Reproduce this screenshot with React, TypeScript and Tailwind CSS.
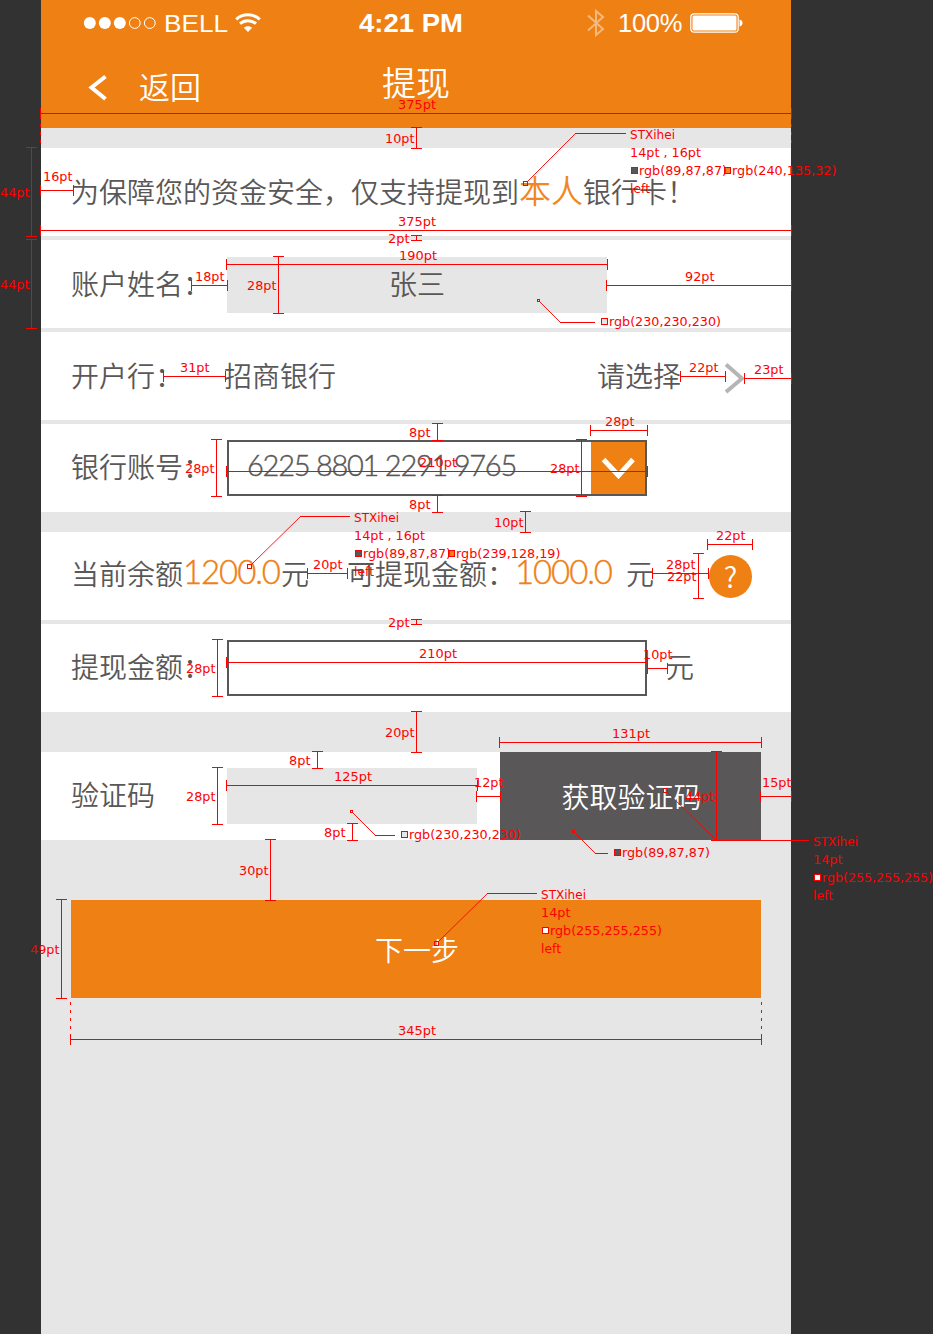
import type { ReactNode } from "react";

const RED = "#ff0000";

type Mark = { text: string; x: number; y: number; w: number };

function Label({ text, x, y, w }: Mark) {
  return (
    <text x={x} y={y} textLength={w} lengthAdjust="spacingAndGlyphs" fill={RED}>
      {text}
    </text>
  );
}

/* [x1, x2, y, label, labelX, labelBaseline, labelWidth] */
const horizontals: [number, number, number, string, number, number, number][] = [
  [40, 791, 113, "375pt", 398, 109, 38],
  [40, 73, 190, "16pt", 43, 181, 29.5],
  [40, 791, 230, "375pt", 398, 226, 38],
  [226, 607, 264, "190pt", 399, 260, 38],
  [191, 227, 285, "18pt", 195, 281, 29.5],
  [606, 791, 285, "92pt", 685, 281, 29.5],
  [163, 225, 376, "31pt", 180, 372, 29.5],
  [680, 725, 376, "22pt", 689, 372, 29.5],
  [744, 791, 378, "23pt", 754, 374, 29.5],
  [590, 647, 430, "28pt", 605, 426, 29.5],
  [226, 647, 471, "210pt", 419, 467, 38],
  [307, 347, 573, "20pt", 313, 569, 29.5],
  [652, 708, 573, "28pt", 666, 569, 29.5],
  [707, 752, 544, "22pt", 716, 540, 29.5],
  [226, 647, 662, "210pt", 419, 658, 38],
  [647, 667, 668, "10pt", 643, 659, 29.5],
  [226, 477, 785, "125pt", 334, 781, 38],
  [476, 500, 796, "12pt", 474, 787, 29.5],
  [499, 761, 742, "131pt", 612, 738, 38],
  [760, 791, 796, "15pt", 762, 787, 29.5],
  [70, 761, 1039, "345pt", 398, 1035, 38],
];

/* [y1, y2, x, label, labelX, labelBaseline, labelWidth] */
const verticals: [number, number, number, string, number, number, number][] = [
  [127, 148, 416, "10pt", 385, 143, 29.5],
  [147, 236, 31, "44pt", 0, 197, 29.5],
  [239, 328, 31, "44pt", 0, 289, 29.5],
  [235, 240, 416, "2pt", 388, 243, 21.5],
  [256, 313, 278, "28pt", 247, 290, 29.5],
  [423, 440, 437, "8pt", 409, 437, 21.5],
  [439, 496, 216, "28pt", 185, 473, 29.5],
  [439, 496, 581, "28pt", 550, 473, 29.5],
  [495, 512, 437, "8pt", 409, 509, 21.5],
  [511, 532, 525, "10pt", 494, 527, 29.5],
  [553, 598, 698, "22pt", 667, 581, 29.5],
  [619, 624, 416, "2pt", 388, 627, 21.5],
  [639, 696, 217, "28pt", 186, 673, 29.5],
  [711, 752, 416, "20pt", 385, 737, 29.5],
  [751, 768, 317, "8pt", 289, 765, 21.5],
  [767, 824, 217, "28pt", 186, 801, 29.5],
  [823, 840, 352, "8pt", 324, 837, 21.5],
  [751, 840, 716, "44pt", 685, 801, 29.5],
  [839, 900, 270, "30pt", 239, 875, 29.5],
  [899, 998, 61, "49pt", 30, 954, 29.5],
];

/* [anchorX, anchorY, anchorSize, elbowX, endX, endY] */
const leaders: number[][] = [
  [525, 183, 4, 575, 626, 133],
  [538, 300, 2, 560, 595, 322],
  [249, 566, 4, 300, 350, 516],
  [351, 811, 2, 375, 395, 835],
  [573, 831, 2, 595, 608, 853],
  [665, 790, 4, 716, 809, 840],
  [436, 943, 4, 487, 537, 893],
];

const swatches: [number, number, string][] = [
  [631, 167, "#595757"],
  [724, 167, "#f08720"],
  [601, 318, "#e6e6e6"],
  [355, 550, "#595757"],
  [448, 550, "#ef8013"],
  [401, 831, "#e6e6e6"],
  [614, 849, "#595757"],
  [814, 874, "#ffffff"],
  [542, 927, "#ffffff"],
];

const notes: Mark[] = [
  { text: "STXihei", x: 630, y: 139, w: 45 },
  { text: "14pt , 16pt", x: 630, y: 157, w: 71 },
  { text: "rgb(89,87,87)", x: 639, y: 175, w: 88 },
  { text: "rgb(240,135,32)", x: 732, y: 175, w: 104.5 },
  { text: "left", x: 630, y: 193, w: 20 },
  { text: "rgb(230,230,230)", x: 609, y: 326, w: 112 },
  { text: "STXihei", x: 354, y: 522, w: 45 },
  { text: "14pt , 16pt", x: 354, y: 540, w: 71 },
  { text: "rgb(89,87,87)", x: 363, y: 558, w: 88 },
  { text: "rgb(239,128,19)", x: 456, y: 558, w: 104.5 },
  { text: "left", x: 354, y: 576, w: 20 },
  { text: "rgb(230,230,230)", x: 409, y: 839, w: 112 },
  { text: "rgb(89,87,87)", x: 622, y: 857, w: 88 },
  { text: "STXihei", x: 813, y: 846, w: 45 },
  { text: "14pt", x: 813, y: 864, w: 29.5 },
  { text: "rgb(255,255,255)", x: 822, y: 882, w: 111 },
  { text: "left", x: 813, y: 900, w: 20 },
  { text: "STXihei", x: 541, y: 899, w: 45 },
  { text: "14pt", x: 541, y: 917, w: 29.5 },
  { text: "rgb(255,255,255)", x: 550, y: 935, w: 112 },
  { text: "left", x: 541, y: 953, w: 20 },
];

/* [x, y1, y2] */
const dashes: number[][] = [
  [40, 124, 144],
  [791, 124, 144],
  [70, 1002, 1030],
  [761, 1002, 1030],
];

function Annotations() {
  return (
    <svg
      className="pointer-events-none absolute left-0 top-0 font-['DejaVu_Sans',sans-serif] text-[13px] font-normal"
      width={933}
      height={1334}
      viewBox="0 0 933 1334"
      fill="none"
    >
      <g stroke={RED} shapeRendering="crispEdges">
        {horizontals.map(([x1, x2, y], i) => (
          <path key={i} d={`M${x1} ${y + 0.5}H${x2}M${x1 + 0.5} ${y - 5}v11M${x2 + 0.5} ${y - 5}v11`} />
        ))}
        {verticals.map(([y1, y2, x], i) => (
          <path key={i} d={`M${x + 0.5} ${y1}V${y2}M${x - 5} ${y1 + 0.5}h11M${x - 5} ${y2 + 0.5}h11`} />
        ))}
        {dashes.map(([x, y1, y2], i) => (
          <path key={i} d={`M${x + 0.5} ${y1}V${y2}`} strokeDasharray="3 5" />
        ))}
        {leaders.map(([ax, ay, s, ex, x2, y2], i) => (
          <g key={i}>
            <path d={`M${ex} ${y2 + 0.5}H${x2}`} />
            <rect x={ax + 0.5 - s / 2} y={ay + 0.5 - s / 2} width={s} height={s} />
          </g>
        ))}
        {swatches.map(([x, y, c], i) => (
          <rect key={i} x={x + 0.5} y={y + 0.5} width={6} height={6} fill={c} />
        ))}
      </g>
      <g stroke={RED} strokeWidth={0.9}>
        {leaders.map(([ax, ay, s, ex, , y2], i) => {
          const down = y2 > ay ? 1 : -1;
          return <path key={i} d={`M${ax + 0.5 + s / 2} ${ay + 0.5 + (down * s) / 2}L${ex + 0.5} ${y2 + 0.5}`} />;
        })}
      </g>
      {horizontals.map(([, , , t, x, y, w], i) => (
        <Label key={i} text={t} x={x} y={y} w={w} />
      ))}
      {verticals.map(([, , , t, x, y, w], i) => (
        <Label key={i} text={t} x={x} y={y} w={w} />
      ))}
      {notes.map((n, i) => (
        <Label key={i} {...n} />
      ))}
    </svg>
  );
}

function StatusBar() {
  return (
    <div className="flex h-[46px] items-center font-['Liberation_Sans',Arial,sans-serif] text-white">
      <svg className="ml-[42px]" width={75} height={14} viewBox="0 0 75 14" fill="#fff">
        <circle cx="6.8" cy="7" r="6" />
        <circle cx="21.8" cy="7" r="6" />
        <circle cx="36.8" cy="7" r="6" />
        <g fill="none" stroke="#fff">
          <circle cx="51.8" cy="7" r="5.4" />
          <circle cx="66.8" cy="7" r="5.4" />
        </g>
      </svg>
      <div className="ml-[6px] w-[71px]">
        <span className="inline-block origin-left scale-x-[1.14] text-[23px] leading-[24px]">BELL</span>
      </div>
      <svg width={26} height={20} viewBox="0 0 26 20" fill="none" stroke="#fff" strokeWidth="3">
        <path d="M1.2 6.4C7.8.3 18.2.3 24.8 6.4" />
        <path d="M5 10.7c4.500-4.100 11.500-4.100 16 0" />
        <path d="M13 19 8.900 14.700c2.400-2 5.800-2 8.200 0Z" fill="#fff" stroke="none" />
      </svg>
      <div className="ml-[98px] w-[110px]">
        <span className="inline-block origin-left scale-x-[1.1] whitespace-nowrap text-[25px] font-bold leading-[24px]">
          4:21 PM
        </span>
      </div>
      <svg className="ml-[118px] opacity-45" width={18} height={28} viewBox="0 0 18 28" fill="none" stroke="#fff" strokeWidth="2">
        <path d="M1 6.500 16 20l-7 6V2l7 6L1 21.500" />
      </svg>
      <span className="ml-[13px] text-[25.500px] leading-[24px] tracking-[-0.3px]">100%</span>
      <svg className="ml-[8px]" width={54} height={20} viewBox="0 0 54 20">
        <rect x="0.800" y="0.800" width="47.400" height="18.400" rx="3.500" fill="none" stroke="#fff" strokeWidth="1.200" />
        <rect x="2.500" y="2.500" width="44" height="15" rx="1.500" fill="#fff" />
        <path d="M49.500 6.500c4 .5 4 6.500 0 7Z" fill="#fff" />
      </svg>
    </div>
  );
}

function Row({ children }: { children: ReactNode }) {
  return <div className="flex h-[88px] items-center bg-white pl-[30px]">{children}</div>;
}

function Name({ children }: { children: ReactNode }) {
  return <span className="w-[156px] shrink-0 whitespace-nowrap pb-[4px]">{children}</span>;
}

function Amount({ children }: { children: ReactNode }) {
  return (
    <span className="font-['Lato',sans-serif] text-[33px] font-light tracking-[-1.100px] text-[#ef8013] [-webkit-text-stroke:0.4px_#ef8013]">
      {children}
    </span>
  );
}

export default function App() {
  return (
    <div className="relative h-[1334px] w-[933px] overflow-hidden bg-[#323232] pl-[41px] font-['Noto_Sans_CJK_SC','Noto_Sans',sans-serif] text-[28px] font-[350] leading-[40px] text-[#595757]">
      <main className="flex h-full w-[750px] flex-col bg-[#e6e6e6]">
        <header className="h-[128px] bg-[#ef8013] text-white">
          <StatusBar />
          <div className="flex h-[82px] items-start">
            <svg className="ml-[47px] mt-[28px]" width={20} height={28} viewBox="0 0 20 28" fill="none" stroke="#fff" strokeWidth="4">
              <path d="M17.500 2.500 3.500 13.500l14 11.500" />
            </svg>
            <span className="ml-[31px] mt-[20px] w-[243px] text-[31px]">返回</span>
            <h1 className="mt-[16px] text-[34px] font-[350]">提现</h1>
          </div>
        </header>

        <section className="mt-[20px] flex flex-col gap-[4px]">
          <Row>
            <p className="flex items-baseline whitespace-nowrap pb-[5px]">
              为保障您的资金安全，仅支持提现到<span className="text-[32px] text-[#f08720]">本人</span>银行卡！
            </p>
          </Row>
          <Row>
            <span className="w-[156px] shrink-0 whitespace-nowrap pb-[2px]">账户姓名：</span>
            <div className="mt-[2px] flex h-[56px] w-[380px] items-center justify-center bg-[#e6e6e6] pb-[4px]">张三</div>
          </Row>
          <Row>
            <span className="w-[153px] pb-[3px]">开户行：</span>
            <span className="w-[373px] pb-[3px]">招商银行</span>
            <span className="w-[126px] pb-[3px]">请选择</span>
            <svg className="mt-[4px]" width={22} height={32} viewBox="0 0 22 32" fill="none" stroke="#b4b5b5" strokeWidth="4">
              <path d="M3 2.500 19 16.500 3 30" />
            </svg>
          </Row>
          <Row>
            <Name>银行账号：</Name>
            <div className="flex h-[56px] w-[420px] items-stretch justify-between border-2 border-[#595757]">
              <span className="self-center whitespace-nowrap pb-[7px] pl-[18px] font-['Lato',sans-serif] text-[29px] font-light tracking-[-1.250px] [-webkit-text-stroke:0.4px_#595757]">
                6225 8801 2291 9765
              </span>
              <div className="flex w-[54px] items-center justify-center bg-[#ef8013]">
                <svg width={34} height={22} viewBox="0 0 34 22" fill="none" stroke="#fff" strokeWidth="5">
                  <path d="M2.500 2.500 17.500 18.500 32 2.500" />
                </svg>
              </div>
            </div>
          </Row>
        </section>

        <section className="mt-[20px] flex flex-col gap-[4px]">
          <Row>
            <div className="flex items-start whitespace-nowrap pb-[9px]">
              <span className="mt-[2px]">当前余额</span>
              <div className="w-[98px]">
                <Amount>1200.0</Amount>
              </div>
              <span className="mt-[2px] w-[66px]">元</span>
              <span className="mt-[2px]">可提现金额：</span>
              <div className="w-[111px]">
                <Amount>1000.0</Amount>
              </div>
              <span className="mt-[2px] w-[83px]">元</span>
            </div>
            <div className="flex size-[43px] items-center justify-center rounded-full bg-[#ef8013] pb-[3px] text-[29px] leading-[40px] text-white">
              ?
            </div>
          </Row>
          <Row>
            <Name>提现金额：</Name>
            <div className="h-[56px] w-[420px] border-2 border-[#595757]" />
            <span className="ml-[19px] pb-[4px]">元</span>
          </Row>
        </section>

        <section className="mt-[40px] flex bg-[#e6e6e6]">
          <div className="flex h-[88px] w-[459px] items-center bg-white pl-[30px]">
            <Name>验证码</Name>
            <div className="h-[56px] w-[250px] bg-[#e6e6e6]" />
          </div>
          <button className="h-[88px] w-[261px] bg-[#595757] pl-[2px] text-white">获取验证码</button>
        </section>

        <button className="mx-[30px] mt-[60px] h-[98px] bg-[#ef8013] pl-[2px] text-white">下一步</button>
      </main>
      <Annotations />
    </div>
  );
}
